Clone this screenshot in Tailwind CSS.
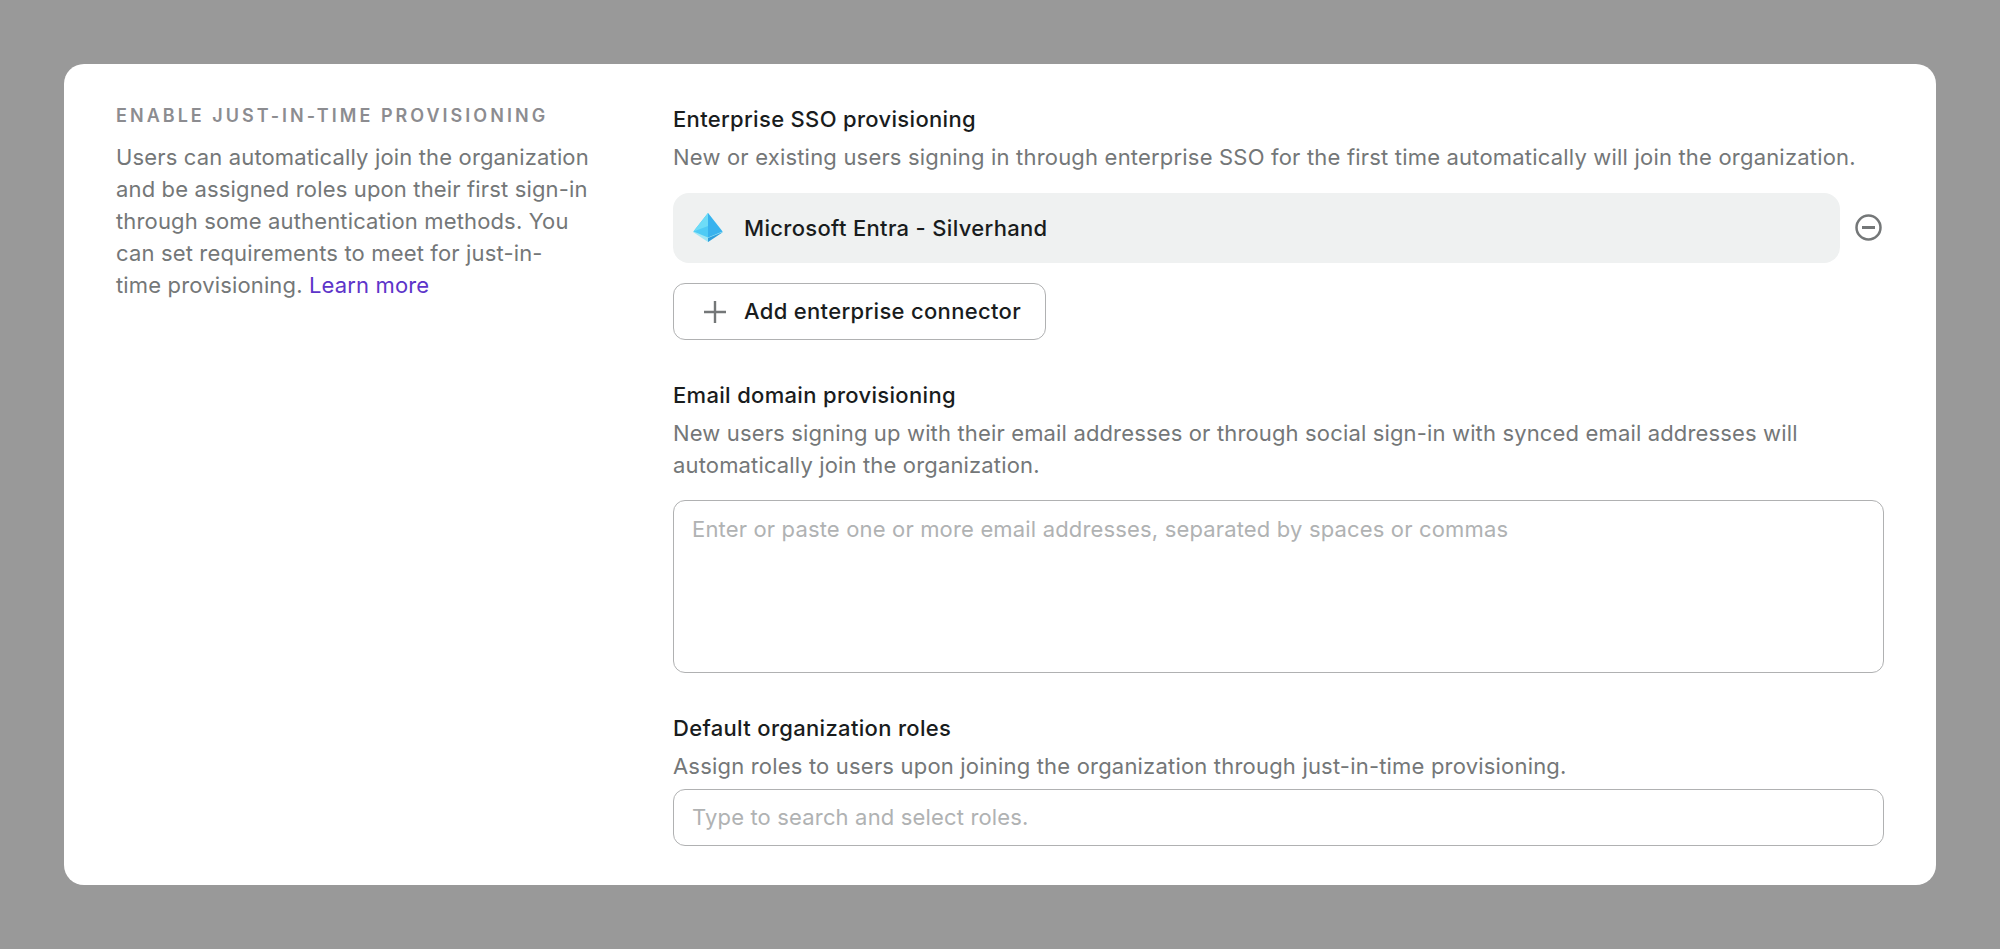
<!DOCTYPE html>
<html lang="en">
<head>
    <meta charset="UTF-8">
    <meta name="viewport" content="width=device-width, initial-scale=1.0">
    <title>Enable just-in-time provisioning</title>
    <script src="https://cdn.jsdelivr.net/npm/@tailwindcss/browser@4"></script>
</head>
<body class="bg-[#999999] h-[949px] overflow-hidden font-['Inter',sans-serif]">
    <div class="pt-[64px] px-[64px]">
        <div class="bg-white rounded-[20px] h-[821px] pl-[52px] pr-[52px] pt-[36px] flex">
            <!-- left description -->
            <div class="w-[557px] shrink-0">
                <div class="text-[18px] leading-[32px] font-semibold tracking-[3.03px] text-[#8c8c90] whitespace-nowrap">ENABLE JUST-IN-TIME PROVISIONING</div>
                <p class="mt-[9px] w-[490px] text-[22px] leading-[32px] tracking-[0.15px] text-[#747778]">Users can automatically join the organization<br>and be assigned roles upon their first sign-in<br>through some authentication methods. You<br>can set requirements to meet for just-in-<br>time provisioning. <a href="#" class="text-[#5d34c9]">Learn more</a></p>
            </div>

            <!-- right form -->
            <div class="flex-1 min-w-0 pt-[2px]">
                <div class="text-[22px] leading-[32px] font-[450] tracking-[0.32px] text-[#191c1d] pt-[1px]">Enterprise SSO provisioning</div>
                <p class="mt-[6px] text-[22px] leading-[32px] tracking-[0.19px] text-[#747778]">New or existing users signing in through enterprise SSO for the first time automatically will join the organization.</p>

                <div class="mt-[20px] flex items-center">
                    <div class="flex-1 h-[70px] rounded-[16px] bg-[#eff1f1] flex items-center pl-[18px]">
                        <svg class="w-[34px] h-[32px] shrink-0" viewBox="0 0 34 32">
                            <path d="M17 1 L2 20 L17 30 L32 20 Z" fill="#9fe6f5"/>
                            <path d="M17 26 L32 20 L17 30 Z" fill="#2f9fdc"/>
                            <path d="M17 1 L2.5 19.5 L17 25.5 Z" fill="#4fcbf5"/>
                            <path d="M17 1 L31.5 19.5 L17 25.5 Z" fill="#38b2ee"/>
                            <path d="M17 1 L2.5 19.5 L17 14 Z" fill="#6edcf7"/>
                        </svg>
                        <span class="ml-[19px] text-[22px] font-[450] tracking-[0.32px] text-[#191c1d]">Microsoft Entra - Silverhand</span>
                    </div>
                    <svg class="ml-[15px] mr-[2px] -mt-[1px] w-[27px] h-[27px] shrink-0" viewBox="0 0 27 27" fill="none" stroke="#747778">
                        <circle cx="13.5" cy="13.5" r="12" stroke-width="2.5"/>
                        <path d="M7 13.5h13" stroke-width="3"/>
                    </svg>
                </div>

                <button class="mt-[20px] w-[373px] h-[57px] rounded-[12px] border border-[#b0b1b2] bg-white flex items-center">
                    <svg class="ml-[30px] w-[22px] h-[22px] shrink-0" viewBox="0 0 22 22" fill="none" stroke="#747778" stroke-width="2.4">
                        <path d="M11 0v22M0 11h22"/>
                    </svg>
                    <span class="ml-[18px] text-[22px] font-[450] tracking-[0.32px] text-[#191c1d] whitespace-nowrap">Add enterprise connector</span>
                </button>

                <div class="mt-[39px] text-[22px] leading-[32px] font-[450] tracking-[0.32px] text-[#191c1d]">Email domain provisioning</div>
                <p class="mt-[6px] text-[22px] leading-[32px] tracking-[0.15px] text-[#747778]">New users signing up with their email addresses or through social sign-in with synced email addresses will<br>automatically join the organization.</p>

                <div class="mt-[19px] h-[173px] rounded-[12px] border border-[#b0b1b2] px-[18px] pt-[12px] text-[22px] leading-[32px] tracking-[0.16px] text-[#b0b2b3]">Enter or paste one or more email addresses, separated by spaces or commas</div>

                <div class="mt-[39px] text-[22px] leading-[32px] font-[450] tracking-[0.32px] text-[#191c1d]">Default organization roles</div>
                <p class="mt-[6px] text-[22px] leading-[32px] tracking-[0.19px] text-[#747778]">Assign roles to users upon joining the organization through just-in-time provisioning.</p>

                <div class="mt-[7px] h-[57px] rounded-[12px] border border-[#b0b1b2] px-[18px] flex items-center text-[22px] tracking-[0.16px] text-[#b0b2b3]">Type to search and select roles.</div>
            </div>
        </div>
    </div>
</body>
</html>
